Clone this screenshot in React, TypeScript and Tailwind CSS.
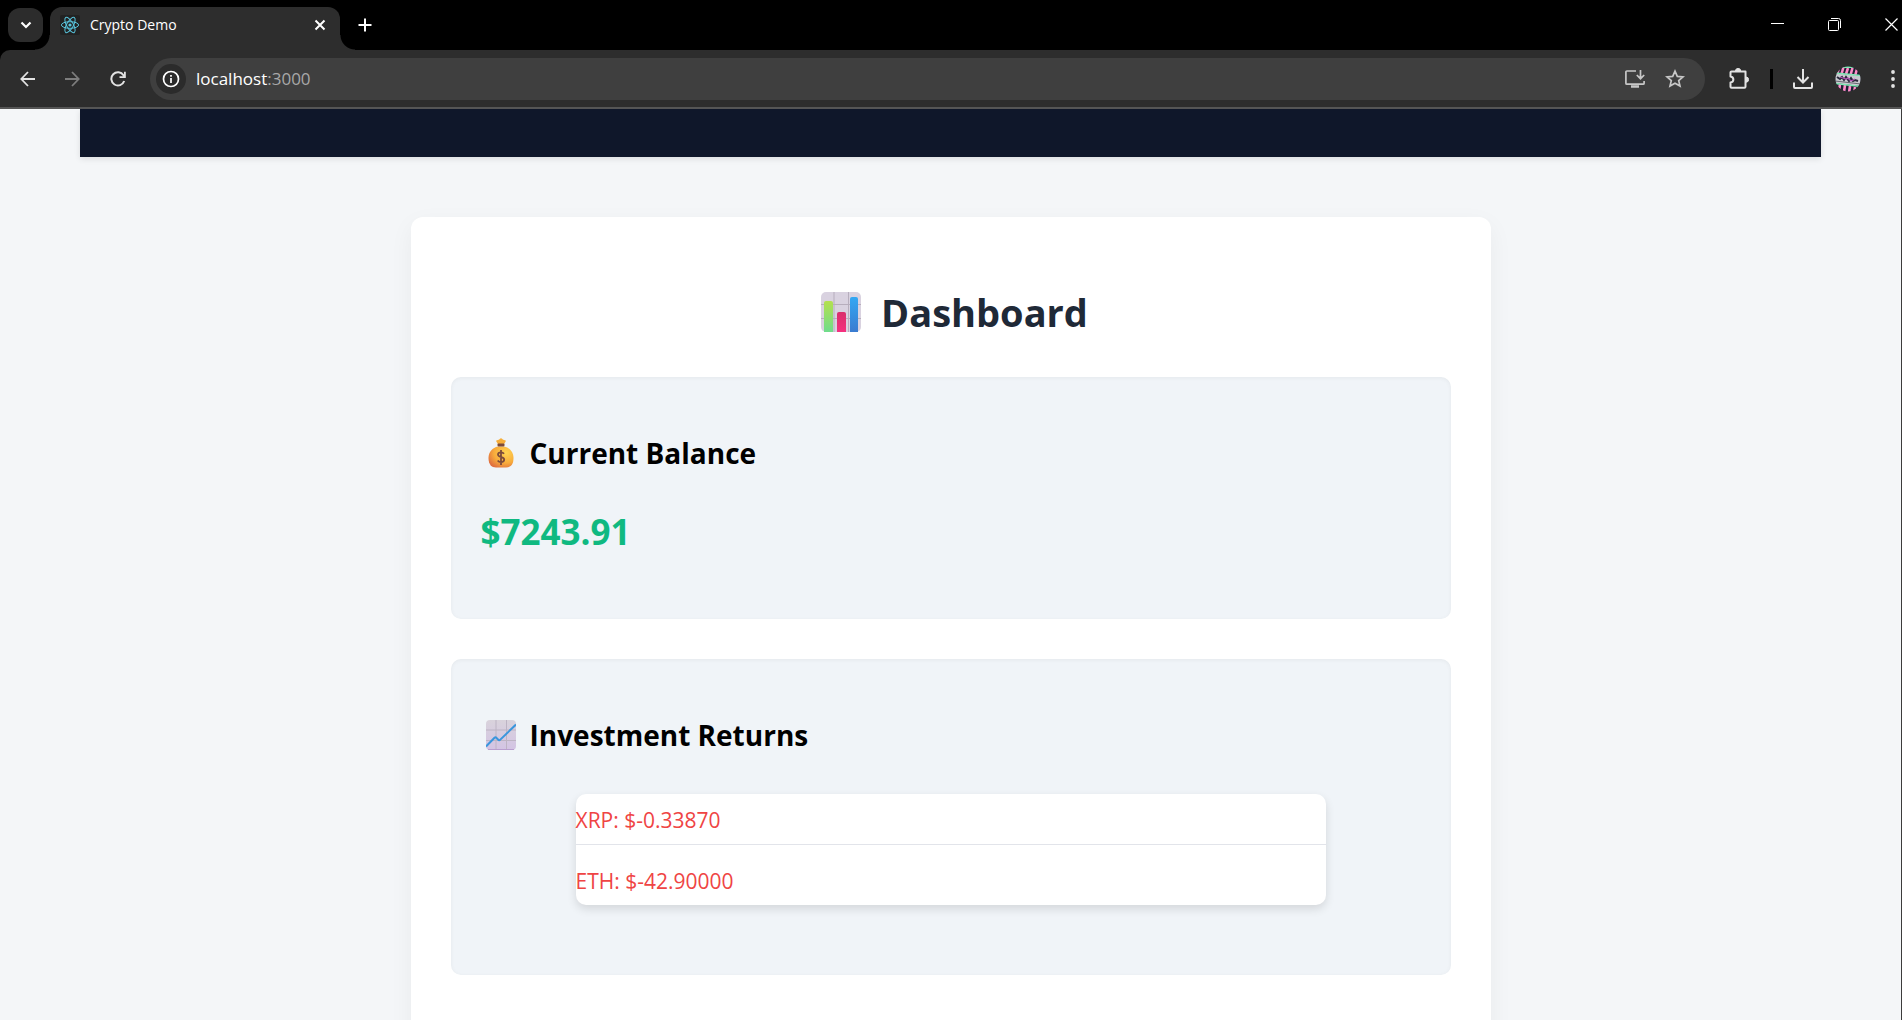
import React from "react";

const icon = "block shrink-0";

function ReactLogo() {
  return (
    <svg viewBox="0 0 20 20" className="size-5 shrink-0 rounded-xs bg-[#222222]" fill="none" stroke="#58c4dc" strokeWidth="1">
      <ellipse cx="10" cy="10" rx="8.6" ry="3.3" />
      <ellipse cx="10" cy="10" rx="8.6" ry="3.3" transform="rotate(60 10 10)" />
      <ellipse cx="10" cy="10" rx="8.6" ry="3.3" transform="rotate(120 10 10)" />
      <circle cx="10" cy="10" r="1.6" fill="#58c4dc" stroke="none" />
    </svg>
  );
}

function TabStrip() {
  return (
    <div className="flex h-[50px] items-start bg-black pl-2">
      <button aria-label="Search tabs" className="mt-2 flex h-[34px] w-[35px] items-center justify-center rounded-xl bg-[#2c2c2c]">
        <svg width="12" height="8" viewBox="0 0 12 8" className={icon} fill="none" stroke="#fff" strokeWidth="2.2">
          <path d="M1.5 1.5 6 6l4.5-4.5" />
        </svg>
      </button>
      <div className="relative mt-[7px] ml-[7px] flex h-[43px] w-[290px] items-center rounded-t-xl bg-[#2d2d2d] pr-3 pb-[15px] pl-[10px] pt-2">
        <span className="absolute bottom-0 -left-[15px] size-[15px] bg-[radial-gradient(circle_at_top_left,transparent_14px,#2d2d2d_15px)]" />
        <span className="absolute -right-[15px] bottom-0 size-[15px] bg-[radial-gradient(circle_at_top_right,transparent_14px,#2d2d2d_15px)]" />
        <ReactLogo />
        <span className="ml-[10px] flex-1 text-sm leading-[22px] text-white">Crypto Demo</span>
        <button aria-label="Close tab" className="flex size-4 items-center justify-center">
          <svg width="12" height="12" viewBox="0 0 12 12" className={icon} stroke="#fff" strokeWidth="2">
            <path d="m1.5 1.5 9 9m0-9-9 9" />
          </svg>
        </button>
      </div>
      <button aria-label="New tab" className="mt-[17px] ml-[17px] flex size-4 items-center justify-center">
        <svg width="14" height="14" viewBox="0 0 14 14" className={icon} stroke="#fff" strokeWidth="2">
          <path d="M7 .5v13M.5 7h13" />
        </svg>
      </button>
      <div className="mt-4 ml-auto flex items-center gap-[42px]">
        <button aria-label="Minimize" className="flex h-4 w-[15px] items-center justify-center">
          <svg width="13" height="15" viewBox="0 0 13 15" className={icon} stroke="#fff">
            <path d="M0 6.5h13" />
          </svg>
        </button>
        <button aria-label="Restore" className="flex h-4 w-[15px] items-center justify-center">
          <svg width="13" height="13" viewBox="0 0 13 13" className={icon} fill="none" stroke="#fff">
            <rect x=".5" y="2.5" width="10" height="10" rx="1" />
            <path d="M3 .5h7.500a2 2 0 0 1 2 2V10" />
          </svg>
        </button>
        <button aria-label="Close window" className="mr-[3px] flex h-4 w-[15px] items-center justify-center">
          <svg width="13" height="13" viewBox="0 0 13 13" className={icon} stroke="#fff" strokeWidth="1.2">
            <path d="m.5.5 12 12m0-12-12 12" />
          </svg>
        </button>
      </div>
    </div>
  );
}

function Avatar() {
  return (
    <svg width="26" height="26" viewBox="0 0 26 26" className={icon}>
      <defs>
        <clipPath id="avatar-clip">
          <circle cx="13" cy="13" r="12.5" />
        </clipPath>
      </defs>
      <g clipPath="url(#avatar-clip)">
        <rect width="26" height="26" fill="#1d2233" />
        <path d="M4 2 2 8M8.500 1 6.500 8M13 2l-2 6M17.500 2l-2 7M22 3l-2 7" stroke="#ff8cc8" strokeWidth="2.600" />
        <path d="m5 18-1 7m6-6-1 7m6-6-1 7m6-6-1 7m5-7-1 6" stroke="#ff8cc8" strokeWidth="2.600" />
        <path d="M6 1h14" stroke="#7fe8b4" strokeWidth="2" />
        <path d="m0 7 26 3v10L0 17z" fill="#c9c9cf" />
        <path d="m0 7 26 2.500M0 17.500l26 3" stroke="#7fe8b4" strokeWidth="1.500" />
        <path d="m0 15 26 3" stroke="#4b4d58" strokeWidth=".8" />
        <path d="m2 11 3 2 2-2 2 3 2-3 3 4 2-3 2 3 2-1 3 1" fill="none" stroke="#2b2a3c" strokeWidth="2" />
        <path d="m5 11 3 1 3 1 2-1 3 3 4-2" fill="none" stroke="#b04fb0" strokeWidth="1.300" />
      </g>
    </svg>
  );
}

function Toolbar() {
  return (
    <div className="bg-black">
      <div className="flex h-[59px] items-center rounded-tl-[10px] border-b-2 border-[#555555] bg-[#2d2d2d] pr-[7px] pl-5">
        <button aria-label="Back">
          <svg width="16" height="16" viewBox="0 0 16 16" className={icon} fill="none" stroke="#e3e3e3" strokeWidth="1.800">
            <path d="M8 1 1.300 8 8 15M1.300 8H15" />
          </svg>
        </button>
        <button aria-label="Forward" className="ml-7">
          <svg width="16" height="16" viewBox="0 0 16 16" className={icon} fill="none" stroke="#7d7d7d" strokeWidth="1.800">
            <path d="m8 1 6.700 7L8 15M14.700 8H1" />
          </svg>
        </button>
        <button aria-label="Reload" className="ml-[30px]">
          <svg width="16" height="16" viewBox="0 0 16 16" className={icon} fill="none" stroke="#e3e3e3" strokeWidth="2">
            <path d="M14.200 10A6.600 6.600 0 1 1 13.500 4.300L14.500 6" />
            <path d="M9.500 6.200h5.400V.8" strokeWidth="1.800" />
          </svg>
        </button>
        <div className="ml-6 flex h-[42px] flex-1 items-center rounded-full bg-[#3f3f3f] pr-5 pl-[6px]">
          <button aria-label="View site information" className="flex size-[30px] items-center justify-center rounded-full bg-[#2b2b2b]">
            <svg width="18" height="18" viewBox="0 0 18 18" className={icon} fill="none" stroke="#fff" strokeWidth="1.700">
              <circle cx="9" cy="9" r="7.500" />
              <path d="M9 8v5M9 5v1.700" />
            </svg>
          </button>
          <div className="relative ml-[10px] flex-1 text-[17px] leading-6 text-[#a8a8a8]">
            <input
              type="text"
              aria-label="Address"
              defaultValue="localhost:3000"
              className="w-full bg-transparent text-transparent outline-none"
            />
            <span aria-hidden="true" className="pointer-events-none absolute inset-0">
              <span className="text-white">localhost</span>:3000
            </span>
          </div>
          <button aria-label="Install app">
            <svg width="20" height="18" viewBox="0 0 20 18" className={icon} fill="none" stroke="#c7c7c7" strokeWidth="1.700">
              <path d="M11 1H1.900a1 1 0 0 0-1 1v11.200a1 1 0 0 0 1 1h16.200a1 1 0 0 0 1-1V11M15.500 0v8.500m-3.700-3.500 3.700 3.700L19.200 5" />
              <path d="M6 16.500h8" strokeWidth="2.500" />
            </svg>
          </button>
          <button aria-label="Bookmark this tab" className="ml-5">
            <svg width="20" height="19" viewBox="0 0 20 19" className={icon} fill="none" stroke="#c7c7c7" strokeWidth="1.700">
              <path d="m10 2.200 2.300 5.200 5.700.5-4.300 3.700 1.300 5.500-5-2.900-5 2.900 1.300-5.500L2 7.900l5.700-.5z" />
            </svg>
          </button>
        </div>
        <button aria-label="Extensions" className="ml-6">
          <svg width="20" height="21" viewBox="0 0 20 21" className={icon}>
            <path
              d="M2.500 3.500h14v15.200a1 1 0 0 1-1 1H2.500a1 1 0 0 1-1-1v-4.200c3.800-.5 3.800-5.500 0-6V4.500a1 1 0 0 1 1-1z"
              fill="none"
              stroke="#e3e3e3"
              strokeWidth="2"
              strokeLinejoin="round"
            />
            <path d="M6.500 3a2.600 2.600 0 0 1 5.200 0zM17 9a2.600 2.600 0 0 1 0 5.200z" fill="#e3e3e3" stroke="#e3e3e3" />
          </svg>
        </button>
        <span className="ml-[21px] h-5 w-[3px] bg-black" />
        <button aria-label="Downloads" className="ml-5">
          <svg width="20" height="20" viewBox="0 0 20 20" className={icon} fill="none" stroke="#e3e3e3" strokeWidth="2">
            <path d="M10 0v13M4.500 8l5.500 5.500L15.500 8" />
            <path d="M1 13.500V18a1 1 0 0 0 1 1h16a1 1 0 0 0 1-1v-4.500" />
          </svg>
        </button>
        <button aria-label="Profile" className="ml-[22px]">
          <Avatar />
        </button>
        <button aria-label="Chrome menu" className="ml-[30px]">
          <svg width="4" height="18" viewBox="0 0 4 18" className={icon} fill="#e3e3e3">
            <circle cx="2" cy="2" r="1.900" />
            <circle cx="2" cy="9" r="1.900" />
            <circle cx="2" cy="16" r="1.900" />
          </svg>
        </button>
      </div>
    </div>
  );
}

function BarChartEmoji() {
  return (
    <svg width="40" height="40" viewBox="0 0 40 40" className={icon} role="img" aria-label="Bar chart">
      <defs>
        <linearGradient id="bar-green" x1="0" y1="0" x2="0" y2="1">
          <stop stopColor="#b4e04f" />
          <stop offset="1" stopColor="#6fdc8c" />
        </linearGradient>
        <linearGradient id="bar-pink" x1="0" y1="0" x2="0" y2="1">
          <stop stopColor="#d92f6c" />
          <stop offset="1" stopColor="#f5317f" />
        </linearGradient>
        <linearGradient id="bar-blue" x1="0" y1="0" x2="0" y2="1">
          <stop stopColor="#33a8f3" />
          <stop offset="1" stopColor="#3a7bd0" />
        </linearGradient>
      </defs>
      <rect width="40" height="40" rx="5" fill="#d9d2e0" />
      <path d="M13 0v40M27.500 0v40M0 12.500h40M0 26.500h40" stroke="#b7aebd" />
      <path d="M3 40V11a2 2 0 0 1 2-2h5a2 2 0 0 1 2 2v29z" fill="url(#bar-green)" />
      <path d="M16 40V22a2 2 0 0 1 2-2h5a2 2 0 0 1 2 2v18z" fill="url(#bar-pink)" />
      <path d="M29 40V7a2 2 0 0 1 2-2h4a2 2 0 0 1 2 2v33z" fill="url(#bar-blue)" />
    </svg>
  );
}

function MoneyBagEmoji() {
  return (
    <svg width="30" height="30" viewBox="0 0 30 30" className={icon} role="img" aria-label="Money bag">
      <defs>
        <radialGradient id="bag" cx=".7" cy=".3" r=".8">
          <stop stopColor="#ffd352" />
          <stop offset=".6" stopColor="#f8ac3c" />
          <stop offset="1" stopColor="#e0703f" />
        </radialGradient>
      </defs>
      <path d="M11 2.200c1.500 0 2-.6 2.700-1.200.8-.9 1.800-.9 2.600 0 .7.600 1.200 1.200 2.700 1.200 1 0 1 1 .5 1.600L17.500 7h-5L10.500 3.800c-.5-.6-.5-1.600.5-1.600z" fill="#f6ae3a" />
      <path d="M12 8.500C6.500 9.500 2.500 14 2.500 20c0 6.500 3 9.500 7.500 9.500h10c4.500 0 7.500-3 7.500-9.500 0-6-4-10.500-9.500-11.500z" fill="url(#bag)" />
      <rect x="11.500" y="5.500" width="7" height="3" rx="1" fill="#7b4a3b" />
      <path d="M18 15.800c-.7-1-1.700-1.500-3-1.500-1.800 0-3 .9-3 2.300 0 3.400 6.200 1.700 6.200 5 0 1.500-1.300 2.500-3.200 2.500-1.500 0-2.600-.6-3.300-1.700M15 12v15" fill="none" stroke="#7b4a3b" strokeWidth="1.800" />
    </svg>
  );
}

function LineChartEmoji() {
  return (
    <svg width="30" height="30" viewBox="0 0 30 30" className={icon} role="img" aria-label="Chart increasing">
      <defs>
        <linearGradient id="sheet" x1="0" y1="0" x2="0" y2="1">
          <stop stopColor="#d9d3dc" />
          <stop offset="1" stopColor="#d3c4e4" />
        </linearGradient>
      </defs>
      <rect width="30" height="30" rx="4" fill="url(#sheet)" />
      <path d="M10 0v30M20.500 0v30M0 10h30M0 20.500h30" stroke="#bdb4c4" />
      <path d="M2 29.500h26" stroke="#b99fcf" />
      <path d="m0 26.500 8.500-8.700c.8-.8 1.300-.8 2 0l1.500 1.700c.8.9 1.500.9 2.300.1L30 4.500" fill="none" stroke="#3a96dd" strokeWidth="2" />
    </svg>
  );
}

function Panel({ emoji, title, children }: { emoji: React.ReactNode; title: string; children: React.ReactNode }) {
  return (
    <section className="rounded-[10px] bg-[#f0f4f8] px-[30px] pt-[55px] pb-[65px] shadow-[inset_0_1px_4px_rgba(0,0,0,0.05)]">
      <h2 className="flex items-center gap-[14px] pl-[5px] text-[28px] leading-[42px] font-bold text-black">
        {emoji}
        {title}
      </h2>
      {children}
    </section>
  );
}

const returns = [
  { symbol: "XRP", amount: "-0.33870" },
  { symbol: "ETH", amount: "-42.90000" },
];

export default function App() {
  return (
    <div className="flex h-screen flex-col overflow-hidden font-['Open_Sans','Noto_Sans',sans-serif]">
      <header className="shrink-0">
        <TabStrip />
        <Toolbar />
      </header>
      <main className="min-h-0 flex-1 overflow-hidden border-r border-[#3c3c3c] bg-[#f4f6f8]">
        <div className="mx-20 h-12 bg-[#0f172a] shadow-[0_2px_6px_rgba(0,0,0,0.1)]" />
        <div className="mx-auto mt-[60px] flex w-full max-w-[1080px] flex-col gap-10 rounded-xl bg-white px-10 pt-[70px] pb-40 shadow-[0_8px_24px_rgba(0,0,0,0.05)]">
          <h1 className="flex items-center justify-center gap-5 pl-2 text-[38px] leading-[50px] font-bold text-[#1f2937]">
            <BarChartEmoji />
            Dashboard
          </h1>
          <Panel emoji={<MoneyBagEmoji />} title="Current Balance">
            <p className="mt-9 text-[35px] leading-[44px] font-bold text-[#10b981]">$7243.91</p>
          </Panel>
          <Panel emoji={<LineChartEmoji />} title="Investment Returns">
            <ul className="mx-auto mt-[38px] mb-[5px] w-full max-w-[750px] divide-y divide-[#e2e4ea] rounded-[10px] bg-white shadow-[0_4px_10px_rgba(0,0,0,0.12)]">
              {returns.map((item) => (
                <li key={item.symbol} className="pt-[11px] pb-[9px] text-[21px] leading-[30px] text-[#ef4444] last:pt-[21px]">
                  {item.symbol}: ${item.amount}
                </li>
              ))}
            </ul>
          </Panel>
        </div>
      </main>
    </div>
  );
}
